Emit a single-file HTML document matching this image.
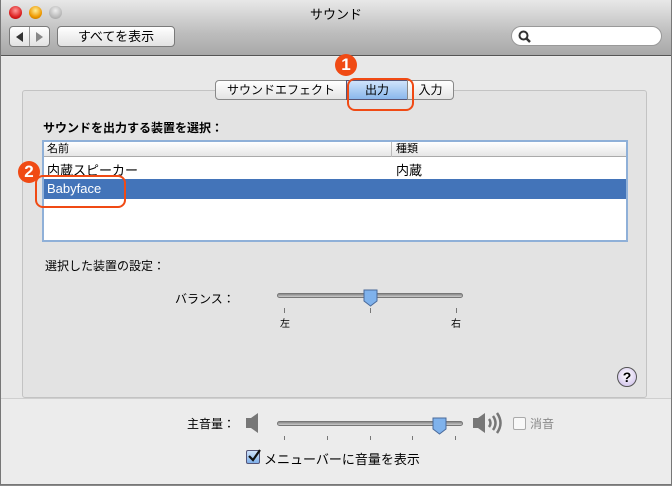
<!DOCTYPE html>
<html><head><meta charset="utf-8"><style>
*{margin:0;padding:0;box-sizing:border-box}
body{width:672px;height:486px;overflow:hidden;background:#8a8a8a;font-family:"Liberation Sans","Noto Sans CJK JP",sans-serif;font-size:12px;color:#000;position:relative}
.win{position:absolute;left:0;top:0;width:672px;height:485px;background:#ececec;border:1px solid #777;border-top:none}
.tb{position:absolute;left:0;top:0;width:100%;height:56px;background:linear-gradient(#e8e8e8,#bdbdbd 60%,#a8a8a8);border-bottom:1px solid #555}
.a{position:absolute}
.light{width:13px;height:13px;border-radius:50%;top:6px}
.btn{background:linear-gradient(#fff,#e2e2e2);border:1px solid #7a7a7a;border-radius:4px;text-align:center}
.content{position:absolute;left:0;top:57px;width:100%;height:342px;background:#e8e8e8;border-bottom:1px solid #cfcfcf}
.group{position:absolute;left:21px;top:33px;width:625px;height:308px;background:#e3e3e3;border:1px solid #c3c3c3;border-radius:3px}
.tab{position:absolute;top:80px;height:20px;background:linear-gradient(#fff,#e4e4e4);border:1px solid #888;line-height:18px;font-size:12px;text-align:center}
.orange{border:2px solid #f04a14;border-radius:8px}
.num{width:22px;height:22px;border-radius:50%;background:#f04a14;color:#fff;font-weight:bold;font-size:17px;text-align:center;line-height:22px}
</style></head><body>
<div class="win">
<div class="tb">
 <div class="a light" style="left:8px;background:radial-gradient(circle at 50% 35%,#f99,#d22 60%,#900)"></div>
 <div class="a light" style="left:28px;background:radial-gradient(circle at 50% 35%,#fe9,#e90 60%,#a60)"></div>
 <div class="a light" style="left:48px;background:radial-gradient(circle at 50% 35%,#eee,#bbb 60%,#999)"></div>
 <div class="a" style="left:0;width:100%;top:4px;text-align:center;font-size:13px">サウンド</div>
 <div class="a btn" style="left:8px;top:26px;width:41px;height:21px;border-radius:4px;overflow:hidden">
  <div class="a" style="left:19px;top:0;width:1px;height:20px;background:#999"></div>
  <div class="a" style="left:6px;top:5px;width:0;height:0;border-top:5px solid transparent;border-bottom:5px solid transparent;border-right:7px solid #333"></div>
  <div class="a" style="left:26px;top:5px;width:0;height:0;border-top:5px solid transparent;border-bottom:5px solid transparent;border-left:7px solid #888"></div>
 </div>
 <div class="a btn" style="left:56px;top:26px;width:118px;height:21px;line-height:19px;font-size:13px">すべてを表示</div>
 <div class="a" style="left:510px;top:26px;width:151px;height:20px;background:#fff;border-radius:10px;border:1px solid #999">
  <svg class="a" style="left:6px;top:3px" width="14" height="14"><circle cx="5.5" cy="5.5" r="4" stroke="#333" stroke-width="2" fill="none"/><line x1="8.5" y1="8.5" x2="12" y2="12" stroke="#333" stroke-width="2.5"/></svg>
 </div>
</div>
<div class="content">
 <div class="group"></div>
</div>
<div class="tab" style="left:214px;width:132px;border-radius:4px 0 0 4px">サウンドエフェクト</div>
<div class="tab" style="left:345px;width:62px;background:linear-gradient(#cfe3fb,#8ab7ec);border-color:#557">出力</div>
<div class="tab" style="left:406px;width:47px;border-radius:0 4px 4px 0">入力</div>
<div class="a orange" style="left:346px;top:78px;width:67px;height:33px"></div>
<div class="a num" style="left:334px;top:54px">1</div>

<div class="a" style="left:42px;top:119px;font-weight:bold;font-size:12px">サウンドを出力する装置を選択：</div>
<div class="a" style="left:41px;top:140px;width:586px;height:102px;background:#fff;border:2px solid #8fb0d8">
 <div class="a" style="left:0;top:0;width:100%;height:15px;background:linear-gradient(#fff,#e6e6e6);border-bottom:1px solid #aaa;font-size:11px;line-height:14px">
  <span class="a" style="left:3px">名前</span><div class="a" style="left:347px;top:0;width:1px;height:15px;background:#bbb"></div><span class="a" style="left:352px">種類</span></div>
 <div class="a" style="left:3px;top:18px;font-size:13px">内蔵スピーカー</div>
 <div class="a" style="left:352px;top:18px;font-size:13px">内蔵</div>
 <div class="a" style="left:0;top:37px;width:100%;height:20px;background:#4374b9;color:#fff;font-size:13px;line-height:19px;padding-left:3px">Babyface</div>
</div>
<div class="a orange" style="left:34px;top:175px;width:91px;height:33px"></div>
<div class="a num" style="left:17px;top:161px">2</div>

<div class="a" style="left:44px;top:257px;font-size:12px">選択した装置の設定：</div>
<div class="a" style="left:174px;top:290px;font-size:12px">バランス：</div>
<div class="a" style="left:276px;top:293px;width:186px;height:5px;border-radius:3px;background:linear-gradient(#888,#ccc);border:1px solid #777"></div>
<svg class="a" style="left:361px;top:289px" width="17" height="19"><path d="M2 1H15V12L8.5 17L2 12Z" fill="#7fb2ec" stroke="#4a6a9a"/></svg>
<div class="a" style="left:283px;top:308px;width:1px;height:5px;background:#777"></div>
<div class="a" style="left:369px;top:308px;width:1px;height:5px;background:#777"></div>
<div class="a" style="left:455px;top:308px;width:1px;height:5px;background:#777"></div>
<div class="a" style="left:279px;top:315px;font-size:10px">左</div>
<div class="a" style="left:450px;top:315px;font-size:10px">右</div>
<div class="a" style="left:616px;top:367px;width:20px;height:20px;border-radius:50%;background:radial-gradient(circle at 50% 40%,#fff,#c9b8e8);border:1px solid #555;text-align:center;font-weight:bold;font-size:14px;line-height:18px">?</div>

<div class="a" style="left:186px;top:415px;font-size:12px">主音量：</div>
<svg class="a" style="left:244px;top:412px" width="20" height="22"><path d="M1 6H6L13 1V21L6 16H1Z" fill="#777"/></svg>
<div class="a" style="left:276px;top:421px;width:186px;height:5px;border-radius:3px;background:linear-gradient(#888,#ccc);border:1px solid #777"></div>
<svg class="a" style="left:430px;top:417px" width="17" height="19"><path d="M2 1H15V12L8.5 17L2 12Z" fill="#7fb2ec" stroke="#4a6a9a"/></svg>
<div class="a" style="left:283px;top:436px;width:1px;height:4px;background:#777"></div>
<div class="a" style="left:326px;top:436px;width:1px;height:4px;background:#777"></div>
<div class="a" style="left:369px;top:436px;width:1px;height:4px;background:#777"></div>
<div class="a" style="left:411px;top:436px;width:1px;height:4px;background:#777"></div>
<div class="a" style="left:454px;top:436px;width:1px;height:4px;background:#777"></div>
<svg class="a" style="left:471px;top:410px" width="32" height="26"><path d="M1 8H6L13 3V23L6 18H1Z" fill="#777"/><path d="M17 9Q20 13 17 17" stroke="#777" stroke-width="2.5" fill="none"/><path d="M21 6Q26 13 21 20" stroke="#777" stroke-width="2.5" fill="none"/><path d="M25 3Q32 13 25 23" stroke="#777" stroke-width="2.5" fill="none"/></svg>
<div class="a" style="left:512px;top:417px;width:13px;height:13px;border:1px solid #aaa;border-radius:2px;background:#f8f8f8"></div>
<div class="a" style="left:529px;top:415px;font-size:12px;color:#888">消音</div>
<div class="a" style="left:245px;top:450px;width:14px;height:14px;border:1px solid #557;border-radius:2px;background:linear-gradient(#cfe3fb,#7fb0ea)"><svg class="a" style="left:0;top:-2px" width="14" height="14"><path d="M2 7L6 11L13 1" stroke="#111" stroke-width="2.2" fill="none"/></svg></div>
<div class="a" style="left:263px;top:449px;font-size:13px">メニューバーに音量を表示</div>
</div>
</body></html>
